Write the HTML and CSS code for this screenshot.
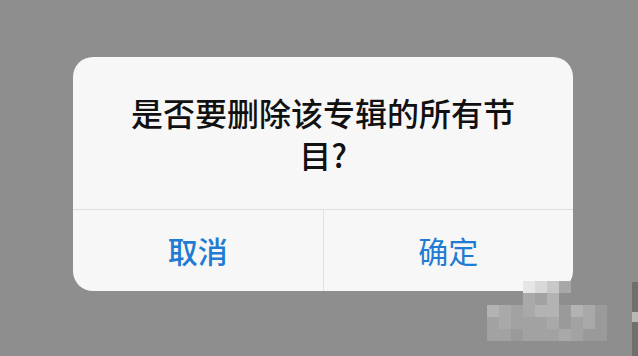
FILE: index.html
```html
<!DOCTYPE html>
<html lang="zh-CN">
<head>
<meta charset="utf-8">
<link rel="stylesheet" href="styles.css">
</head>
<body>
<div class="screen">
  <div class="dialog">
    <div class="message">是否要删除该专辑的所有节目?</div>
    <div class="actions">
      <div class="btn cancel">取消</div>
      <div class="btn">确定</div>
    </div>
  </div>
  <div class="mosaic">
    <div class="mrow top">
      <span class="c1"></span><span class="c2"></span><span class="c3"></span><span class="c4"></span>
    </div>
    <div class="mrow mid">
      <span class="c2"></span><span class="c3"></span><span class="c1"></span>
    </div>
    <div class="mrow">
      <span class="c1"></span><span class="c2"></span><span class="c3"></span><span class="c2"></span><span class="c1"></span><span class="c1"></span><span class="c4"></span><span class="c1"></span><span class="c2"></span><span class="c4"></span>
    </div>
    <div class="mrow">
      <span class="c3"></span><span class="c2"></span><span class="c3"></span><span class="c3"></span><span class="c3"></span><span class="c2"></span><span class="c4"></span><span class="c3"></span><span class="c2"></span><span class="c4"></span>
    </div>
    <div class="mrow">
      <span class="c3"></span><span class="c3"></span><span class="c4"></span><span class="c3"></span><span class="c3"></span><span class="c3"></span><span class="c2"></span><span class="c3"></span><span class="c4"></span><span class="c4"></span>
    </div>
  </div>
  <div class="edge"><span class="dark"></span><span class="light"></span><span class="dark long"></span></div>
</div>
</body>
</html>
```
FILE: styles.css
```css
html, body {
  margin: 0;
  padding: 0;
}
body {
  background: #8e8e8e;
  font-family: "Noto Sans CJK SC", "Noto Sans", sans-serif;
}
.screen {
  position: relative;
  width: 638px;
  height: 356px;
  overflow: hidden;
  padding: 57px 0 0 73px;
  box-sizing: border-box;
}
.dialog {
  width: 500px;
  height: 234px;
  background: #f7f7f7;
  border-radius: 20px;
  display: flex;
  flex-direction: column;
  overflow: hidden;
}
.message {
  height: 153px;
  box-sizing: border-box;
  padding: 34px 50px 0;
  text-align: center;
  font-size: 32px;
  line-height: 42px;
  color: #111;
  font-weight: 500;
  border-bottom: 1px solid #dedede;
}
.actions {
  flex: 1;
  display: flex;
}
.btn {
  flex: 1;
  display: flex;
  align-items: center;
  justify-content: center;
  font-size: 30px;
  color: #1f7cd2;
  padding-bottom: 2px;
}
.btn.cancel {
  font-weight: 500;
}
.btn + .btn {
  border-left: 1px solid #e2e2e2;
}
.mosaic {
  position: absolute;
  left: 487px;
  top: 281px;
  display: flex;
  flex-direction: column;
}
.mrow {
  display: flex;
  height: 12px;
}
.mrow.top { margin-left: 36px; }
.mrow.mid { margin-left: 36px; }
.mrow span {
  width: 12px;
  height: 12px;
}
.c1 { background: #b3b3b3; }
.c2 { background: #a9a9a9; }
.c3 { background: #a2a2a2; }
.c4 { background: #9a9a9a; }
.mrow.top .c1 { background: #e6e6e6; }
.mrow.top .c2 { background: #d8d8d8; }
.mrow.top .c3 { background: #c8c8c8; }
.mrow.top .c4 { background: #a8a8a8; }
.edge {
  position: absolute;
  right: 0;
  top: 282px;
  width: 6px;
  display: flex;
  flex-direction: column;
}
.edge .dark { height: 30px; background: #6f6f6f; }
.edge .light { height: 10px; background: #b8b8b8; }
.edge .long { height: 40px; }
```
